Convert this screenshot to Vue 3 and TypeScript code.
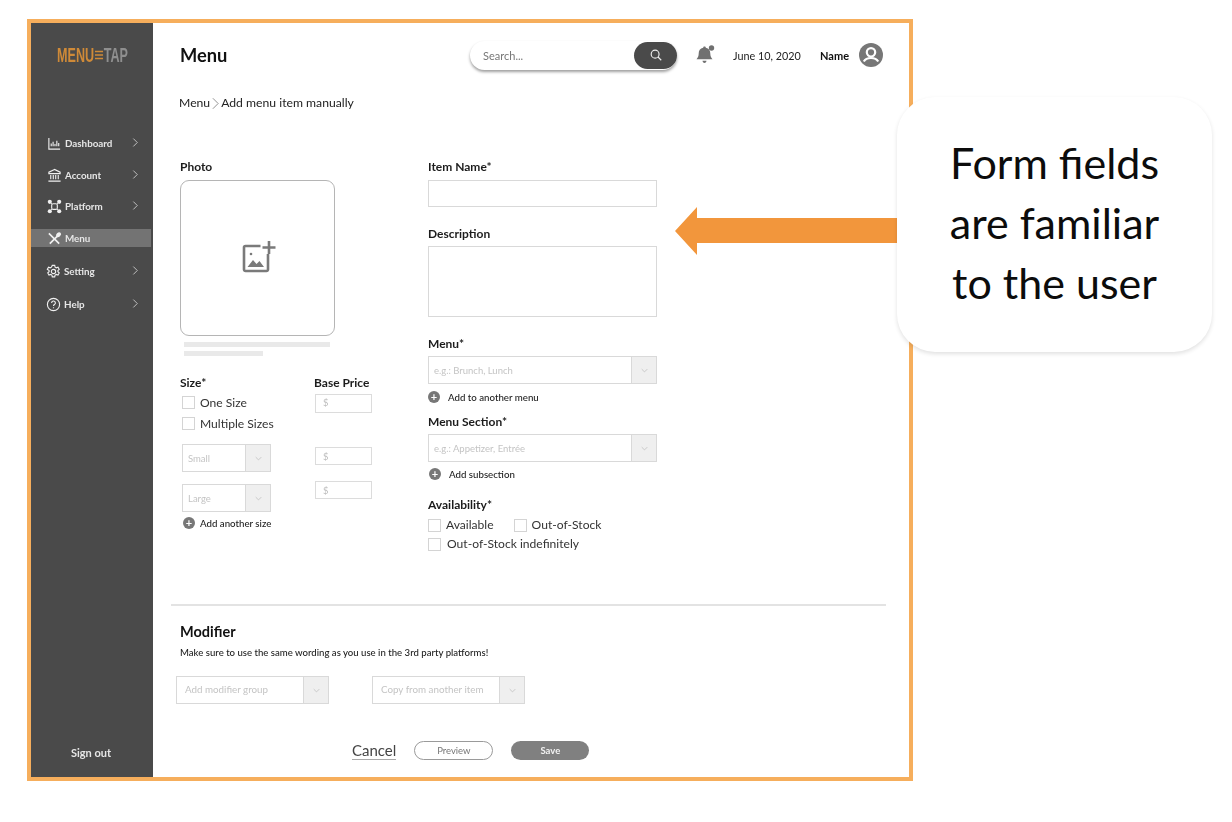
<script setup lang="ts">
interface NavItem { label: string; icon: string; chevron: boolean; active?: boolean; gap: number; left: number }
const nav: NavItem[] = [
  { label: 'Dashboard', icon: 'chart', chevron: true, gap: 0, left: 16 },
  { label: 'Account', icon: 'bank', chevron: true, gap: 14, left: 16 },
  { label: 'Platform', icon: 'nodes', chevron: true, gap: 13, left: 16 },
  { label: 'Menu', icon: 'fork', chevron: false, active: true, gap: 14, left: 16 },
  { label: 'Setting', icon: 'gear', chevron: true, gap: 15, left: 15 },
  { label: 'Help', icon: 'help', chevron: true, gap: 15, left: 15 },
]
</script>

<template>
  <div class="page">
    <div class="frame">
      <aside class="side">
        <div class="logo"><span class="logo-a">MENU</span><svg class="logo-i" viewBox="0 0 14 10"><path d="M0 1.500h14M0 5h14M0 8.500h14" stroke="#cf8a38" stroke-width="1.500" /></svg><span class="logo-b">TAP</span></div>
        <nav class="nav">
          <div v-for="n in nav" :key="n.label" class="nav-row" :class="{ active: n.active }" :style="{ marginTop: n.gap + 'px', paddingLeft: n.left + 'px' }">
            <svg class="nav-ico" viewBox="0 0 16 16" fill="none" stroke="#f0f0f0" stroke-width="1.200">
              <template v-if="n.icon === 'chart'"><path d="M2 2v12h12M4.500 11V8M6.500 11V6M8.500 11V8.500M10.500 11V5M12.500 11V7.500" /></template>
              <template v-else-if="n.icon === 'bank'"><path d="M8 1.500 2 4.500v1.500h12V4.500zM4 7.500v4.500M6.700 7.500v4.500M9.300 7.500v4.500M12 7.500v4.500M1.500 14h13" /></template>
              <template v-else-if="n.icon === 'nodes'"><path d="M3 3l10 10M13 3 3 13" stroke-width=".9" /><rect x="5" y="5" width="6" height="6" rx="1.500" fill="#4a4a4a" /><g fill="#f0f0f0" stroke="none"><circle cx="3" cy="3" r="2.200" /><circle cx="13" cy="3" r="2.200" /><circle cx="3" cy="13" r="2.200" /><circle cx="13" cy="13" r="2.200" /></g></template>
              <template v-else-if="n.icon === 'fork'"><path d="M2 2.500l11 11M14 2.500 3 13.500" stroke-width="1.800" /><ellipse cx="12.300" cy="4" rx="2.200" ry="3" transform="rotate(45 12.300 4)" fill="#f0f0f0" stroke="none" /></template>
              <template v-else-if="n.icon === 'gear'"><path d="M6.700 1.500h2.600l.4 1.900 1.300.7 1.800-.7 1.300 2.300-1.400 1.200v1.400l1.400 1.200-1.300 2.300-1.800-.7-1.300.7-.4 1.900H6.700l-.4-1.900-1.300-.7-1.800.7-1.300-2.300 1.400-1.200V6.900L1.400 5.700l1.300-2.300 1.800.7 1.300-.7z" /><circle cx="8" cy="8" r="2.300" /></template>
              <template v-else><circle cx="8" cy="8" r="6.500" /><path d="M6 6.300a2 2 0 1 1 3 1.700c-.7.400-1 .8-1 1.500" /><path d="M8 11v1" /></template>
            </svg>
            <span class="nav-text">{{ n.label }}</span>
            <svg v-if="n.chevron" class="nav-chev" viewBox="0 0 8 12" fill="none" stroke="#cfcfcf" stroke-width="1"><path d="M1.500 1.500 6 6l-4.500 4.500" /></svg>
          </div>
        </nav>
        <div class="signout">Sign out</div>
      </aside>

      <main class="main">
        <header class="top">
          <h1 class="title">Menu</h1>
          <div class="search">
            <span class="search-text">Search...</span>
            <span class="search-btn"><svg viewBox="0 0 16 16" width="14" height="14" fill="none" stroke="#f0f0f0" stroke-width="1.300"><circle cx="7" cy="7" r="4.500" /><path d="M10.300 10.300 14 14" /></svg></span>
          </div>
          <svg class="bell" viewBox="0 0 20 20"><path d="M8.500 1.500c.8 0 1.300.5 1.300 1.200 3.200.7 4.500 3 4.500 5.800 0 2.600.8 4.300 2.200 5.700H.5C1.900 12.800 2.700 11.100 2.700 8.500c0-2.800 1.300-5.100 4.500-5.800C7.200 2 7.700 1.500 8.500 1.500zM6.500 15.800h4c0 1.200-.9 2.200-2 2.200s-2-1-2-2.200z" fill="#707070" /><circle cx="15.500" cy="3" r="2.700" fill="#707070" /></svg>
          <span class="date">June 10, 2020</span>
          <span class="name">Name</span>
          <svg class="avatar" viewBox="0 0 24 24"><circle cx="12" cy="12" r="12" fill="#777" /><circle cx="12" cy="9.300" r="4.200" fill="none" stroke="#fff" stroke-width="2.200" /><path d="M4.800 18.500c1.500-2.700 4.200-3.500 7.200-3.500s5.700.8 7.200 3.500" fill="none" stroke="#fff" stroke-width="2.200" /></svg>
        </header>

        <div class="crumb">Menu<svg class="crumb-chev" viewBox="0 0 8 14" fill="none" stroke="#777" stroke-width=".9"><path d="M1 1l6 6-6 6" /></svg>Add menu item manually</div>

        <section class="form">
          <div class="col-left">
            <div class="label">Photo</div>
            <div class="photo">
              <svg viewBox="0 0 36 36" width="36" height="36" fill="none" stroke="#7a7a7a" stroke-width="2.600"><path d="M20.500 6H5.500A1.500 1.500 0 0 0 4 7.500V29.500A1.500 1.500 0 0 0 5.500 31H26.500A1.500 1.500 0 0 0 28 29.500V14" /><path d="M29 1v13M22.500 7.500h13" /><path d="M7.500 27l5.500-7 3.500 4 3-3 4.500 6z" fill="#7a7a7a" stroke="none" /><circle cx="11" cy="14" r="1.300" fill="#7a7a7a" stroke="none" /></svg>
            </div>
            <div class="bar bar-a"></div>
            <div class="bar bar-b"></div>
            <div class="sizes">
              <div class="size-col">
                <div class="label">Size*</div>
                <label class="check first"><span class="box"></span>One Size</label>
                <label class="check"><span class="box"></span>Multiple Sizes</label>
                <div class="select small s1"><span>Small</span><i><svg viewBox="0 0 10 6"><path d="M1 1l4 4 4-4" /></svg></i></div>
                <div class="select small s2"><span>Large</span><i><svg viewBox="0 0 10 6"><path d="M1 1l4 4 4-4" /></svg></i></div>
                <div class="add a0"><b>+</b>Add another size</div>
              </div>
              <div class="price-col">
                <div class="label">Base Price</div>
                <div class="price p1">$</div>
                <div class="price p2">$</div>
                <div class="price p3">$</div>
              </div>
            </div>
          </div>

          <div class="col-right">
            <div class="label">Item Name*</div>
            <div class="input i1"></div>
            <div class="label mt18">Description</div>
            <div class="input i2"></div>
            <div class="label mt18">Menu*</div>
            <div class="select wide"><span>e.g.: Brunch, Lunch</span><i><svg viewBox="0 0 10 6"><path d="M1 1l4 4 4-4" /></svg></i></div>
            <div class="add a1"><b>+</b>Add to another menu</div>
            <div class="label mt8">Menu Section*</div>
            <div class="select wide"><span>e.g.: Appetizer, Entrée</span><i><svg viewBox="0 0 10 6"><path d="M1 1l4 4 4-4" /></svg></i></div>
            <div class="add a2"><b>+</b>Add subsection</div>
            <div class="label mt14">Availability*</div>
            <div class="avail">
              <label class="check"><span class="box"></span>Available</label>
              <label class="check"><span class="box"></span>Out-of-Stock</label>
            </div>
            <label class="check last"><span class="box"></span>Out-of-Stock indefinitely</label>
          </div>
        </section>

        <div class="rule"></div>

        <section class="modifier">
          <h2 class="mod-title">Modifier</h2>
          <p class="mod-note">Make sure to use the same wording as you use in the 3rd party platforms!</p>
          <div class="mod-row">
            <div class="select mod"><span>Add modifier group</span><i><svg viewBox="0 0 10 6"><path d="M1 1l4 4 4-4" /></svg></i></div>
            <div class="select mod"><span>Copy from another item</span><i><svg viewBox="0 0 10 6"><path d="M1 1l4 4 4-4" /></svg></i></div>
          </div>
        </section>

        <div class="actions">
          <span class="cancel">Cancel</span>
          <span class="btn preview">Preview</span>
          <span class="btn save">Save</span>
        </div>
      </main>
    </div>

    <svg class="arrow" viewBox="0 0 224 48"><path d="M0 24 22 0v11h202v25H22v12z" fill="#f2963c" /></svg>
    <div class="callout">Form fields<br />are familiar<br />to the user</div>
  </div>
</template>

<style>
html, body { margin: 0; background: #fff; }
</style>

<style scoped>
.page { position: relative; width: 1232px; height: 822px; padding: 19px 0 0 27px; box-sizing: border-box; overflow: hidden; font-family: Lato, "Liberation Sans", sans-serif; color: #1c1c1c; }
.frame { width: 886px; height: 762px; box-sizing: border-box; border: 4px solid #f6ae5c; display: flex; filter: blur(.4px); background: #fff; }
.side { width: 122px; flex: none; background: #4a4a4a; display: flex; flex-direction: column; color: #e6e6e6; }
.logo { height: 20px; margin: 22px 0 0 26px; display: flex; align-items: center; font-family: "Liberation Sans", sans-serif; font-weight: 700; font-size: 21px; line-height: 20px; white-space: nowrap; transform: scaleX(.6); transform-origin: left center; }
.logo-a { color: #cf8a38; }
.logo-b { color: #8f8f8f; }
.logo-i { width: 14px; height: 10px; margin: 0 1px; flex: none; }
.nav { margin-top: 69px; }
.nav-row { height: 18px; display: flex; align-items: center; position: relative; font-size: 9.800px; font-weight: 700; width: 120px; box-sizing: border-box; }
.nav-row.active { background: #737373; }
.nav-ico { width: 15px; height: 15px; flex: none; margin-right: 3px; }
.nav-chev { width: 7px; height: 11px; position: absolute; left: 101px; top: 3px; }
.signout { margin-top: auto; margin-bottom: 16px; padding-right: 2px; text-align: center; font-size: 11px; font-weight: 700; line-height: 16px; }
.main { flex: 1; min-width: 0; display: flex; flex-direction: column; }
.top { height: 64px; display: flex; align-items: center; padding-left: 27px; flex: none; }
.title { margin: 0; width: 290px; font-size: 18.300px; font-weight: 700; color: #111; }
.search { width: 207px; height: 29px; border-radius: 15px; display: flex; justify-content: space-between; align-items: center; box-shadow: 0 2px 3px rgba(0,0,0,.38); background: #fff; }
.search-text { margin-left: 13px; font-size: 11px; color: #777; }
.search-btn { width: 43px; height: 27px; border-radius: 14px; background: #4a4a4a; display: flex; align-items: center; justify-content: center; }
.bell { width: 20px; height: 20px; margin-left: 19px; }
.date { margin-left: 17px; font-size: 10.800px; color: #222; width: 87px; }
.name { font-size: 11px; font-weight: 700; color: #111; width: 39px; }
.avatar { width: 24px; height: 24px; margin-top: -1px; }
.crumb { margin: 8px 0 0 26px; height: 16px; line-height: 18px; font-size: 12.200px; display: flex; align-items: center; color: #222; }
.crumb-chev { width: 7px; height: 13px; margin: 0 2px; }
.form { margin: 47px 0 0 27px; display: grid; grid-template-columns: 248px 229px; height: 394px; }
.label { font-size: 12px; font-weight: 700; height: 16px; line-height: 18px; color: #1c1c1c; }
.photo { margin-top: 6px; width: 155px; height: 156px; box-sizing: border-box; border: 1px solid #b5b5b5; border-radius: 9px; display: flex; align-items: center; justify-content: center; }
.bar { background: #e9e9e9; height: 5px; margin-left: 4px; }
.bar-a { width: 146px; margin-top: 6px; }
.bar-b { width: 79px; margin-top: 4px; }
.sizes { display: flex; margin-top: 18px; }
.size-col { width: 134px; }
.check { display: flex; align-items: center; font-size: 12.100px; line-height: 16px; color: #333; }
.box { width: 11px; height: 11px; border: 1px solid #d4d4d4; margin-right: 5px; flex: none; }
.size-col .check { height: 21px; padding-left: 2px; }
.size-col .first { margin-top: 2px; }
.select { display: flex; box-sizing: border-box; border: 1px solid #d9d9d9; height: 28px; background: #fff; align-items: center; }
.select span { flex: 1; font-size: 9.500px; color: #c4c4c4; padding-left: 5px; white-space: nowrap; }
.select i { width: 24px; align-self: stretch; background: #efefef; border-left: 1px solid #d9d9d9; display: flex; align-items: center; justify-content: center; flex: none; }
.select svg { width: 7px; height: 5px; fill: none; stroke: #b9b9b9; stroke-width: 1; }
.small { width: 89px; margin-left: 2px; }
.s1 { margin-top: 10px; }
.s2 { margin-top: 12px; }
.add { display: flex; align-items: center; font-size: 9.700px; line-height: 16px; font-weight: 500; color: #222; }
.add b { width: 12px; height: 12px; border-radius: 50%; background: #777; color: #fff; font-size: 11px; line-height: 11px; text-align: center; margin-right: 5px; flex: none; }
.a0 { margin: 3px 0 0 3px; }
.a1 { margin: 5px 0 0; }
.a1 b { margin-right: 8px; }
.a2 { margin: 4px 0 0 1px; }
.a2 b { margin-right: 8px; }
.price { width: 57px; margin-left: 1px; box-sizing: border-box; border: 1px solid #dcdcdc; font-size: 9.500px; color: #bdbdbd; padding-left: 7px; height: 18px; line-height: 18px; }
.p1 { margin-top: 4px; height: 19px; line-height: 16px; }
.p2 { margin-top: 34px; }
.p3 { margin-top: 16px; }
.input { border: 1px solid #d9d9d9; box-sizing: border-box; width: 229px; }
.i1 { margin-top: 6px; height: 27px; }
.i2 { margin-top: 5px; height: 71px; }
.mt18 { margin-top: 18px; }
.mt8 { margin-top: 8px; }
.mt14 { margin-top: 14px; }
.wide { width: 229px; margin-top: 5px; }
.avail { display: flex; gap: 20px; margin-top: 5px; height: 16px; }
.last { margin-top: 3px; gap: 1px; }
.rule { margin: 52px 23px 0 18px; height: 2px; background: #e3e3e3; flex: none; }
.modifier { margin: 16px 0 0 27px; }
.mod-title { margin: 0; font-size: 14.500px; line-height: 20px; font-weight: 700; color: #111; }
.mod-note { margin: 4px 0 0; font-size: 9.600px; line-height: 14px; color: #222; font-weight: 500; }
.mod-row { display: flex; gap: 43px; margin: 16px 0 0 -4px; }
.mod { width: 153px; }
.mod span { padding-left: 8px; font-size: 9.800px; line-height: 11px; padding-bottom: 2px; }
.actions { display: flex; align-items: center; margin: 37px 0 0 199px; gap: 18px; }
.cancel { font-size: 15px; line-height: 17px; color: #444; border-bottom: 1px solid #aaa; }
.btn { height: 19px; border-radius: 10px; box-sizing: border-box; display: flex; align-items: center; justify-content: center; font-size: 9.500px; width: 79px; }
.preview { border: 1px solid #9a9a9a; color: #777; }
.save { background: #808080; color: #f2f2f2; font-weight: 700; width: 78px; }
.arrow { position: absolute; left: 675px; top: 207px; width: 224px; height: 48px; }
.callout { position: absolute; left: 897px; top: 97px; width: 315px; height: 255px; box-sizing: border-box; padding-top: 36px; border-radius: 38px; background: #fff; box-shadow: 0 2px 4px rgba(0,0,0,.12); text-align: center; font-size: 43px; line-height: 60px; color: #0c0c0c; }
</style>
